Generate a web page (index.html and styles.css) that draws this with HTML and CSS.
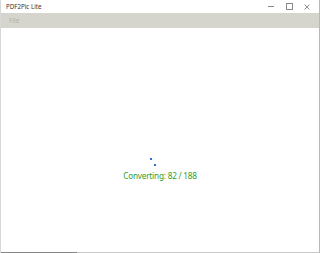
FILE: index.html
```html
<!DOCTYPE html>
<html>
<head>
<meta charset="utf-8">
<link rel="stylesheet" href="styles.css">
</head>
<body>
<div class="window">
  <div class="titlebar">
    <span class="title">PDF2Pic Lite</span>
    <div class="controls">
      <span class="ctl min"></span>
      <span class="ctl max"></span>
      <span class="ctl close">
        <svg width="6" height="6" viewBox="0 0 6 6"><path d="M0.5 0.5L5.5 5.5M5.5 0.5L0.5 5.5" stroke="#666" stroke-width="0.7"/></svg>
      </span>
    </div>
  </div>
  <div class="menubar"><span class="menu-item">File</span></div>
  <div class="content">
    <div class="spinner">
      <span class="dot d1"></span>
      <span class="dot d2"></span>
    </div>
    <div class="status">Converting: 82 / 188</div>
  </div>
  <div class="bottom"><span class="bottom-dark"></span></div>
</div>
</body>
</html>
```
FILE: styles.css
```css
html, body {
  margin: 0;
  padding: 0;
  background: #fff;
}
.window {
  width: 320px;
  height: 253px;
  display: flex;
  flex-direction: column;
  box-sizing: border-box;
  border-left: 1px solid #d8d8d8;
  border-right: 1px solid #b8b8b8;
  font-family: "Noto Sans", "Open Sans", sans-serif;
}
.titlebar {
  height: 13px;
  display: flex;
  align-items: center;
  justify-content: space-between;
  padding-left: 5px;
  padding-right: 3px;
}
.title {
  font-size: 6.2px;
  color: #333;
}
.controls {
  display: flex;
  align-items: center;
  height: 13px;
}
.ctl {
  width: 18px;
  height: 13px;
  display: flex;
  align-items: center;
  justify-content: center;
}
.min::before {
  content: "";
  width: 6px;
  height: 1px;
  background: #888;
}
.max::before {
  content: "";
  width: 5px;
  height: 5px;
  border: 1px solid #888;
}
.menubar {
  height: 15px;
  background: #d5d5cd;
  display: flex;
  align-items: center;
  padding-left: 8px;
}
.menu-item {
  font-size: 6.5px;
  color: #b4b4ac;
}
.content {
  flex: 1;
  display: flex;
  flex-direction: column;
  align-items: center;
  padding-top: 130px;
}
.spinner {
  width: 8px;
  height: 9px;
  position: relative;
  margin-left: -12px;
}
.dot {
  position: absolute;
  width: 2px;
  height: 2px;
  background: #2a72d8;
}
.d1 { left: 0; top: 0; }
.d2 { left: 4px; top: 6px; }
.status {
  font-size: 8.2px;
  letter-spacing: -0.2px;
  color: #2c9e2c;
  margin-top: 3px;
}
.bottom {
  height: 1px;
  background: #c8c8c8;
  display: flex;
}
.bottom-dark {
  width: 76px;
  background: #858585;
}
```
